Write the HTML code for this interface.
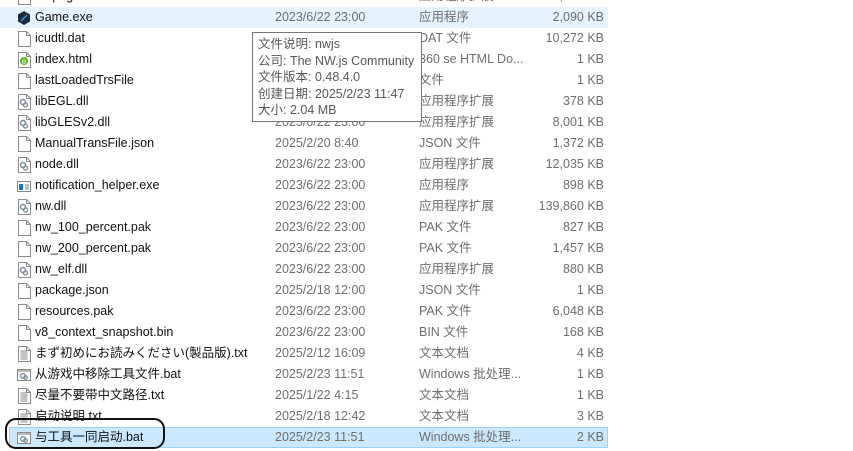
<!DOCTYPE html>
<html><head><meta charset="utf-8"><style>
body{margin:0;width:853px;height:451px;background:#fff;overflow:hidden;position:relative;font-family:"Liberation Sans","Noto Sans CJK SC",sans-serif;font-size:12.5px;}
.r{position:absolute;left:0;width:608px;height:21px;line-height:21px;}
.r span{position:absolute;white-space:nowrap;}
.n{left:35px;color:#111}
.d{left:275px;color:#6d6d6d}
.t{left:419px;color:#6d6d6d}
.s{right:4px;color:#6d6d6d}
.i{position:absolute;left:17px;top:3px;width:14px;height:16px}
.hov{background:#e5f3ff}
.sel{background:#cce8ff;box-shadow:inset 0 0 0 1px #99d1ff;left:9px;width:599px}
.sel .n{left:26px}.sel .d{left:266px}.sel .t{left:410px}.sel .i{left:8px}
.tip{position:absolute;left:252px;top:32px;width:170px;height:90px;border:1px solid #767676;background:#fff;color:#575757;line-height:16.5px;padding:3px 0 0 5px;box-sizing:border-box;font-size:12.5px;white-space:nowrap}
.ring{position:absolute;left:5px;top:418px;width:160px;height:31px;border:2px solid #111;border-radius:11px;box-sizing:border-box}
</style></head><body>
<svg width="0" height="0" style="position:absolute"><defs>
<g id="doc"><path d="M1.5 .5h8l4 4v11h-12z" fill="#fff" stroke="#8a8a8a"/><path d="M9.5 .5v4h4" fill="none" stroke="#8a8a8a"/></g>
<g id="dll"><use href="#doc"/><circle cx="6" cy="8" r="2.5" fill="none" stroke="#7a8a9a" stroke-width="1.5"/><circle cx="8.5" cy="11" r="2" fill="none" stroke="#7a8a9a" stroke-width="1.3"/></g>
<g id="txt"><use href="#doc"/><path d="M3.5 5h7M3.5 7h7M3.5 9h7M3.5 11h7M3.5 13h7" stroke="#888"/></g>
<g id="bat"><rect x=".5" y="2.5" width="13" height="11" fill="#fff" stroke="#888"/><rect x="1" y="3" width="12" height="2" fill="#bbb"/><circle cx="6" cy="9" r="2.3" fill="none" stroke="#7a8a9a" stroke-width="1.4"/><circle cx="8.5" cy="10.5" r="1.8" fill="none" stroke="#7a8a9a" stroke-width="1.2"/></g>
</defs></svg>
<div class="r" style="top:-14px"><svg class="i"><use href="#doc"/></svg><span class="n">nmpeg.dll</span><span class="d">2023/6/22 23:00</span><span class="t">应用程序扩展</span><span class="s">1,600 KB</span></div>
<div class="r hov" style="top:7px"><svg class="i" viewBox="0 0 14 16"><path d="M7 1l6 3.5v7L7 15l-6-3.5v-7z" fill="#1f2a38"/><path d="M4 11l6-6" stroke="#3a8ee6" stroke-width="1.5"/></svg><span class="n">Game.exe</span><span class="d">2023/6/22 23:00</span><span class="t">应用程序</span><span class="s">2,090 KB</span></div>
<div class="r" style="top:28px"><svg class="i"><use href="#doc"/></svg><span class="n">icudtl.dat</span><span class="d">2023/6/22 23:00</span><span class="t">DAT 文件</span><span class="s">10,272 KB</span></div>
<div class="r" style="top:49px"><svg class="i"><use href="#doc"/><circle cx="7" cy="9" r="4" fill="#5cb82a"/><text x="4.8" y="12" font-size="8" fill="#fff" font-family="Liberation Sans">e</text></svg><span class="n">index.html</span><span class="d">2025/2/23 11:47</span><span class="t">360 se HTML Do...</span><span class="s">1 KB</span></div>
<div class="r" style="top:70px"><svg class="i"><use href="#doc"/></svg><span class="n">lastLoadedTrsFile</span><span class="d">2025/2/23 11:47</span><span class="t">文件</span><span class="s">1 KB</span></div>
<div class="r" style="top:91px"><svg class="i"><use href="#dll"/></svg><span class="n">libEGL.dll</span><span class="d">2023/6/22 23:00</span><span class="t">应用程序扩展</span><span class="s">378 KB</span></div>
<div class="r" style="top:112px"><svg class="i"><use href="#dll"/></svg><span class="n">libGLESv2.dll</span><span class="d">2023/6/22 23:00</span><span class="t">应用程序扩展</span><span class="s">8,001 KB</span></div>
<div class="r" style="top:133px"><svg class="i"><use href="#doc"/></svg><span class="n">ManualTransFile.json</span><span class="d">2025/2/20 8:40</span><span class="t">JSON 文件</span><span class="s">1,372 KB</span></div>
<div class="r" style="top:154px"><svg class="i"><use href="#dll"/></svg><span class="n">node.dll</span><span class="d">2023/6/22 23:00</span><span class="t">应用程序扩展</span><span class="s">12,035 KB</span></div>
<div class="r" style="top:175px"><svg class="i" viewBox="0 0 14 16"><rect x=".5" y="3.5" width="13" height="10" fill="#fff" stroke="#888"/><rect x="2" y="6" width="4" height="6" fill="#1874d0"/><path d="M8 7h4M8 9h4M8 11h4" stroke="#888"/></svg><span class="n">notification_helper.exe</span><span class="d">2023/6/22 23:00</span><span class="t">应用程序</span><span class="s">898 KB</span></div>
<div class="r" style="top:196px"><svg class="i"><use href="#dll"/></svg><span class="n">nw.dll</span><span class="d">2023/6/22 23:00</span><span class="t">应用程序扩展</span><span class="s">139,860 KB</span></div>
<div class="r" style="top:217px"><svg class="i"><use href="#doc"/></svg><span class="n">nw_100_percent.pak</span><span class="d">2023/6/22 23:00</span><span class="t">PAK 文件</span><span class="s">827 KB</span></div>
<div class="r" style="top:238px"><svg class="i"><use href="#doc"/></svg><span class="n">nw_200_percent.pak</span><span class="d">2023/6/22 23:00</span><span class="t">PAK 文件</span><span class="s">1,457 KB</span></div>
<div class="r" style="top:259px"><svg class="i"><use href="#dll"/></svg><span class="n">nw_elf.dll</span><span class="d">2023/6/22 23:00</span><span class="t">应用程序扩展</span><span class="s">880 KB</span></div>
<div class="r" style="top:280px"><svg class="i"><use href="#doc"/></svg><span class="n">package.json</span><span class="d">2025/2/18 12:00</span><span class="t">JSON 文件</span><span class="s">1 KB</span></div>
<div class="r" style="top:301px"><svg class="i"><use href="#doc"/></svg><span class="n">resources.pak</span><span class="d">2023/6/22 23:00</span><span class="t">PAK 文件</span><span class="s">6,048 KB</span></div>
<div class="r" style="top:322px"><svg class="i"><use href="#doc"/></svg><span class="n">v8_context_snapshot.bin</span><span class="d">2023/6/22 23:00</span><span class="t">BIN 文件</span><span class="s">168 KB</span></div>
<div class="r" style="top:343px"><svg class="i"><use href="#txt"/></svg><span class="n">まず初めにお読みください(製品版).txt</span><span class="d">2025/2/12 16:09</span><span class="t">文本文档</span><span class="s">4 KB</span></div>
<div class="r" style="top:364px"><svg class="i"><use href="#bat"/></svg><span class="n">从游戏中移除工具文件.bat</span><span class="d">2025/2/23 11:51</span><span class="t">Windows 批处理...</span><span class="s">1 KB</span></div>
<div class="r" style="top:385px"><svg class="i"><use href="#txt"/></svg><span class="n">尽量不要带中文路径.txt</span><span class="d">2025/1/22 4:15</span><span class="t">文本文档</span><span class="s">1 KB</span></div>
<div class="r" style="top:406px"><svg class="i"><use href="#txt"/></svg><span class="n">启动说明.txt</span><span class="d">2025/2/18 12:42</span><span class="t">文本文档</span><span class="s">3 KB</span></div>
<div class="r sel" style="top:427px"><svg class="i"><use href="#bat"/></svg><span class="n">与工具一同启动.bat</span><span class="d">2025/2/23 11:51</span><span class="t">Windows 批处理...</span><span class="s">2 KB</span></div>
<div class="tip">文件说明: nwjs<br>公司: The NW.js Community<br>文件版本: 0.48.4.0<br>创建日期: 2025/2/23 11:47<br>大小: 2.04 MB</div>
<div class="ring"></div>
</body></html>
